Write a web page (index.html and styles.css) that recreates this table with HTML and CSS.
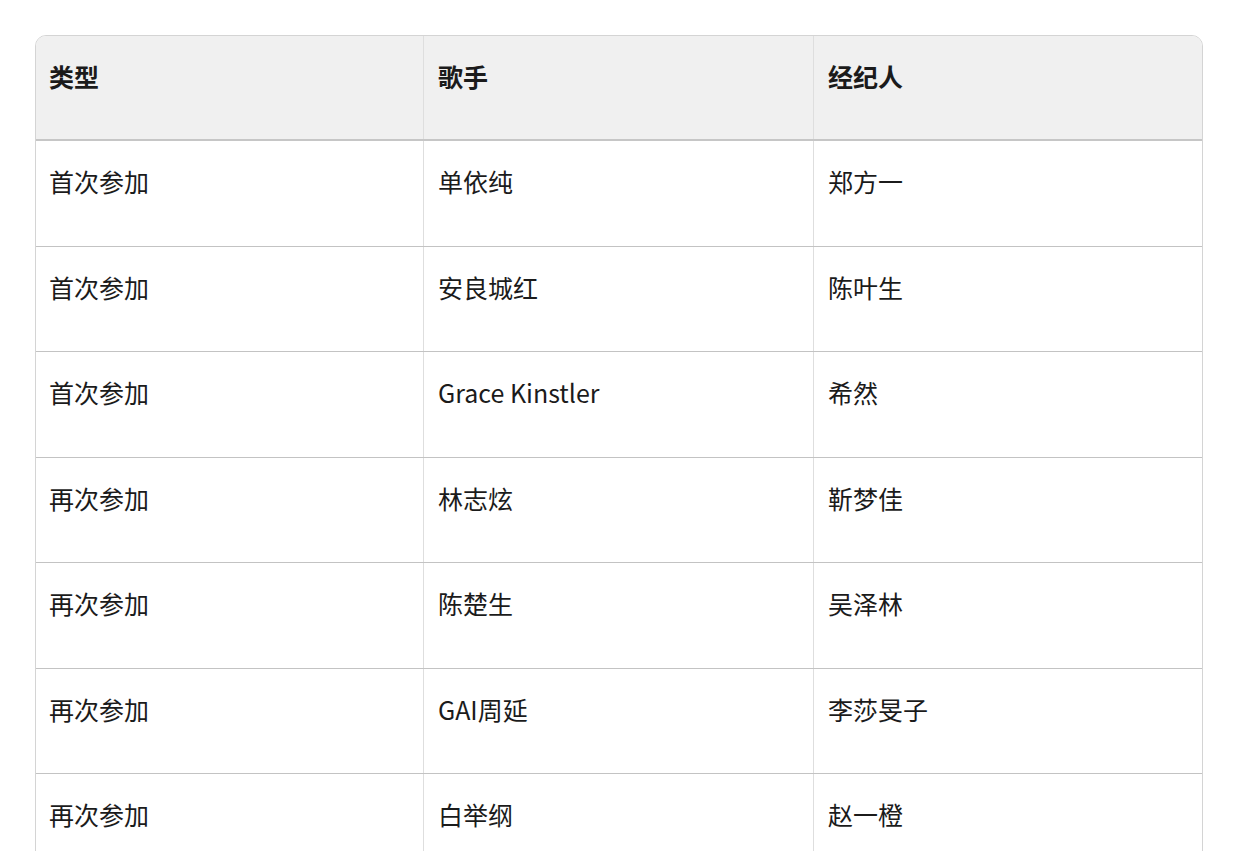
FILE: index.html
```html
<!DOCTYPE html>
<html lang="zh">
<head>
<meta charset="utf-8">
<title>名单</title>
<link rel="stylesheet" href="styles.css">
</head>
<body>
<div class="table">
  <div class="row head">
    <div class="cell">类型</div>
    <div class="cell">歌手</div>
    <div class="cell">经纪人</div>
  </div>
  <div class="row">
    <div class="cell">首次参加</div>
    <div class="cell">单依纯</div>
    <div class="cell">郑方一</div>
  </div>
  <div class="row">
    <div class="cell">首次参加</div>
    <div class="cell">安良城红</div>
    <div class="cell">陈叶生</div>
  </div>
  <div class="row">
    <div class="cell">首次参加</div>
    <div class="cell">Grace Kinstler</div>
    <div class="cell">希然</div>
  </div>
  <div class="row">
    <div class="cell">再次参加</div>
    <div class="cell">林志炫</div>
    <div class="cell">靳梦佳</div>
  </div>
  <div class="row">
    <div class="cell">再次参加</div>
    <div class="cell">陈楚生</div>
    <div class="cell">吴泽林</div>
  </div>
  <div class="row">
    <div class="cell">再次参加</div>
    <div class="cell">GAI周延</div>
    <div class="cell">李莎旻子</div>
  </div>
  <div class="row">
    <div class="cell">再次参加</div>
    <div class="cell">白举纲</div>
    <div class="cell">赵一橙</div>
  </div>
</div>
</body>
</html>
```

FILE: styles.css
```css
html, body {
  margin: 0;
  padding: 0;
  background: #ffffff;
}

body {
  padding: 35px 0 0 35px;
  font-family: "Noto Sans CJK SC", "Noto Sans", sans-serif;
  color: #1b1b1b;
  overflow: hidden;
}

.table {
  width: 1168px;
  box-sizing: border-box;
  border: 1px solid #d4d4d4;
  border-radius: 11px;
  overflow: hidden;
}

.row {
  display: grid;
  grid-template-columns: 387px 390px 389px;
  height: 105.5px;
  box-sizing: border-box;
  border-bottom: 1.5px solid #c3c3c3;
}

.row.head {
  height: 105px;
  background: #f0f0f0;
  border-bottom: 2px solid #c6c6c6;
}

.cell {
  padding: 22px 14px 0 13px;
  font-size: 25px;
  line-height: 36px;
  box-sizing: border-box;
}

.cell + .cell {
  border-left: 1px solid #dedede;
  padding-left: 14px;
}

.head .cell {
  font-weight: 700;
  padding-top: 22px;
}
```
